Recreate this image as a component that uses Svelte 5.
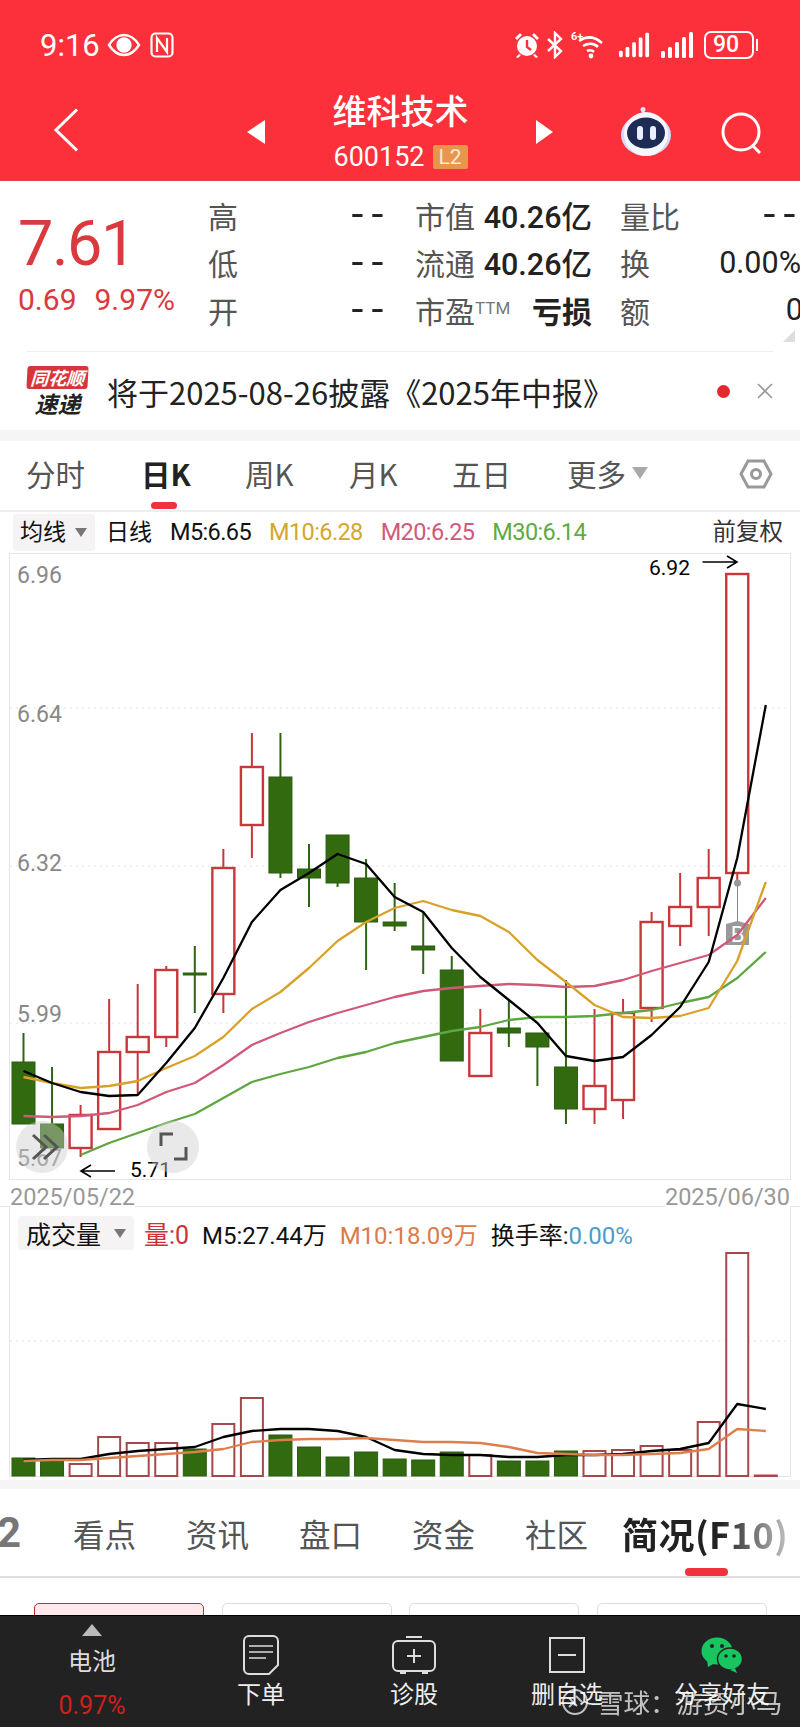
<script>
  // one day of the chart: wick top, body top, body bottom, wick bottom, up or down
  const candles = [
    [1033, 1062, 1124, 1124, 'g'], [1067, 1124, 1148, 1148, 'g'], [1105, 1115, 1148, 1157, 'r'],
    [999, 1052, 1129, 1129, 'r'], [984, 1037, 1052, 1095, 'r'], [966, 970, 1037, 1047, 'r'],
    [946, 973, 975, 1013, 'g'], [849, 868, 994, 1013, 'r'], [733, 767, 825, 858, 'r'],
    [733, 777, 873, 878, 'g'], [844, 869, 878, 907, 'g'], [835, 835, 883, 887, 'g'],
    [859, 878, 922, 970, 'g'], [883, 922, 926, 931, 'g'], [913, 946, 950, 974, 'g'],
    [956, 970, 1061, 1061, 'g'], [1009, 1033, 1076, 1076, 'r'], [1000, 1028, 1033, 1047, 'g'],
    [1033, 1033, 1047, 1086, 'g'], [980, 1067, 1109, 1124, 'g'], [1009, 1086, 1109, 1124, 'r'],
    [999, 1013, 1100, 1119, 'r'], [912, 922, 1008, 1022, 'r'], [873, 907, 926, 946, 'r'],
    [849, 878, 907, 936, 'r'], [574, 574, 873, 880, 'r']
  ];
  const xAt = (i) => 23.5 + i * 28.55;

  const ma5 = [1071, 1083, 1092, 1096, 1095, 1063, 1028, 978, 922, 890, 873, 854, 864, 897, 912, 948, 977, 1000, 1023, 1056, 1061, 1057, 1035, 1007, 962, 858, 705];
  const ma10 = [1077, 1083, 1088, 1086, 1081, 1068, 1056, 1037, 1009, 992, 968, 941, 922, 908, 901, 910, 916, 932, 960, 982, 1005, 1017, 1018, 1016, 1008, 961, 882];
  const ma20 = [1116, 1117, 1116, 1113, 1105, 1092, 1083, 1065, 1045, 1033, 1022, 1013, 1005, 997, 991, 988, 986, 984, 985, 987, 986, 980, 971, 963, 955, 935, 898];
  const ma30 = [null, null, 1155, 1143, 1133, 1123, 1114, 1098, 1082, 1074, 1067, 1058, 1052, 1043, 1037, 1031, 1027, 1020, 1017, 1017, 1016, 1013, 1010, 1003, 997, 978, 952];

  const volumes = [
    [1458, 'g'], [1461, 'g'], [1464, 'r'], [1437, 'r'], [1443, 'r'], [1443, 'r'], [1449, 'g'], [1424, 'r'], [1398, 'r'],
    [1435, 'g'], [1447, 'g'], [1457, 'g'], [1452, 'g'], [1459, 'g'], [1460, 'g'], [1452, 'g'], [1455, 'r'], [1461, 'g'],
    [1461, 'g'], [1451, 'g'], [1451, 'r'], [1450, 'r'], [1446, 'r'], [1450, 'r'], [1422, 'r'], [1253, 'r'], [1475.5, 'r']
  ];
  const volM5 = [1460, 1459, 1459, 1454, 1451, 1449, 1447, 1437, 1431, 1429, 1429, 1431, 1437, 1450, 1454, 1455, 1455, 1457, 1457, 1455, 1455, 1454, 1451, 1449, 1443, 1404, 1409];
  const volM10 = [1461, 1460, 1460, 1458, 1456, 1454, 1452, 1449, 1442, 1440, 1439, 1439, 1438, 1440, 1442, 1442, 1443, 1447, 1453, 1454, 1455, 1455, 1454, 1453, 1449, 1429, 1431];

  const line = (ys) => ys.map((y, i) => (y === null ? null : `${xAt(i)},${y}`)).filter(Boolean).join(' ');

  const axis = [['6.96', 575], ['6.64', 714], ['6.32', 863], ['5.99', 1014], ['5.67', 1158]];
  const quote = [
    ['高', '--', '市值', '40.26亿', '量比', '--'],
    ['低', '--', '流通', '40.26亿', '换', '0.00%'],
    ['开', '--', '市盈', '亏损', '额', '0']
  ];
  const periods = ['分时', '日K', '周K', '月K', '五日'];
  const sections = ['看点', '资讯', '盘口', '资金', '社区'];
</script>

<div class="phone">
  <header class="top">
    <div class="status">
      <span class="time">9:16</span>
      <svg class="ic-eye" viewBox="0 0 34 24" width="34" height="24" fill="none" stroke="#fff" stroke-width="2.4">
        <path d="M2 12C7 4 12 2 17 2s10 2 15 10c-5 8-10 10-15 10S7 20 2 12z" />
        <circle cx="17" cy="12" r="6.5" fill="#fff" />
      </svg>
      <svg class="ic-nfc" viewBox="0 0 24 26" width="24" height="26" fill="none" stroke="#fff" stroke-width="2.2">
        <rect x="1.5" y="1.5" width="21" height="23" rx="4" />
        <path d="M7 20V6l10 14V6" />
      </svg>
      <span class="spacer"></span>
      <svg viewBox="0 0 28 28" width="28" height="28" fill="#fff">
        <circle cx="14" cy="15" r="10" />
        <path d="M2 7l5-5 2 2-5 5zM26 7l-5-5-2 2 5 5zM6 23l-3 3 2 1 3-3zM22 23l3 3-2 1-3-3z" />
        <path d="M14 9v7l4 3" stroke="#fc303a" stroke-width="2.4" fill="none" />
      </svg>
      <svg viewBox="0 0 18 28" width="18" height="28" fill="none" stroke="#fff" stroke-width="2.4">
        <path d="M2 8l13 12-6 6V2l6 6L2 20" />
      </svg>
      <svg class="ic-wifi" viewBox="0 0 34 28" width="34" height="28" fill="none" stroke="#fff" stroke-width="2.6">
        <path d="M8 10c7-5 15-5 23 2M12 15c5-3 11-3 15 1M16 20c2-1 5-1 7 1" />
        <circle cx="20" cy="25" r="2.4" fill="#fff" stroke="none" />
        <text x="0" y="9" class="six">6+</text>
      </svg>
      <svg class="ic-bars first" viewBox="0 0 33 26" width="31" height="26" fill="#fff">
        <rect x="0" y="19" width="4" height="7" rx="1.5" /><rect x="7" y="15" width="4" height="11" rx="1.5" />
        <rect x="14" y="10" width="4" height="16" rx="1.5" /><rect x="21" y="5" width="4" height="21" rx="1.5" />
        <rect x="28" y="0" width="4" height="26" rx="1.5" />
      </svg>
      <svg class="ic-bars" viewBox="0 0 33 26" width="33" height="26" fill="#fff">
        <rect x="0" y="19" width="4" height="7" rx="1.5" /><rect x="7" y="15" width="4" height="11" rx="1.5" />
        <rect x="14" y="10" width="4" height="16" rx="1.5" /><rect x="21" y="5" width="4" height="21" rx="1.5" />
        <rect x="28" y="0" width="4" height="26" rx="1.5" />
      </svg>
      <span class="battery"><span>90</span></span>
    </div>

    <div class="nav">
      <svg class="back" viewBox="0 0 26 44" width="26" height="44" fill="none" stroke="#fff" stroke-width="3">
        <path d="M24 1.5L3 22l21 20.5" />
      </svg>
      <i class="tri left"></i>
      <div class="name">
        <h1>维科技术</h1>
        <div class="code">600152<b>L2</b></div>
      </div>
      <i class="tri right"></i>
      <svg class="robot" viewBox="0 0 50 50" width="50" height="50">
        <circle cx="22" cy="2.5" r="2.5" fill="#e4e6fa" />
        <path d="M22 4c1 3 2 4 3 5" stroke="#e4e6fa" stroke-width="2" fill="none" />
        <ellipse cx="25" cy="28" rx="25" ry="21" fill="#d5d9fb" />
        <circle cx="25" cy="27" r="22" fill="#f7f7ff" />
        <ellipse cx="25" cy="26" rx="19" ry="15.5" fill="#1e2b54" />
        <rect x="16" y="19" width="6" height="14" rx="3" fill="#e8f0ff" />
        <rect x="29" y="19" width="6" height="14" rx="3" fill="#e8f0ff" />
      </svg>
      <svg class="search" viewBox="0 0 42 42" width="42" height="42" fill="none" stroke="#fff" stroke-width="3">
        <circle cx="20" cy="20" r="18" />
        <path d="M31 33l8 8" />
      </svg>
    </div>
  </header>

  <section class="quote">
    <div class="price">
      <div class="last">7.61</div>
      <div class="change"><span>0.69</span><span>9.97%</span></div>
    </div>
    <div class="table">
      {#each quote as row, r}
        <div class="label">{row[0]}</div>
        <div class="value plain"><span class="dash">{row[1]}</span></div>
        <div class="label">{row[2]}{#if r === 2}<sup>TTM</sup>{/if}</div>
        <div class="value" class:loss={r === 2}>{row[3]}</div>
        <div class="label">{row[4]}</div>
        <div class="value plain" class:cut={r === 2}>
          {#if row[5] === '--'}<span class="dash edge">{row[5]}</span>{:else}{row[5]}{/if}
        </div>
      {/each}
    </div>
    <i class="fold"></i>
  </section>

  <section class="news">
    <div class="brand">
      <span class="tag">同花顺</span>
      <span class="flash">速递</span>
    </div>
    <p>将于2025-08-26披露《2025年中报》</p>
    <i class="dot"></i>
    <svg viewBox="0 0 16 16" width="16" height="16" fill="none" stroke="#999" stroke-width="1.6">
      <path d="M1 1l14 14M15 1L1 15" />
    </svg>
  </section>

  <nav class="periods">
    {#each periods as p, i}
      <span class:on={i === 1}>{p}</span>
    {/each}
    <span class="more">更多<i></i></span>
    <svg viewBox="0 0 34 30" width="34" height="30" fill="none" stroke="#999" stroke-width="3">
      <path d="M9 2h16l7 13-7 13H9L2 15z" />
      <circle cx="17" cy="15" r="4.5" />
    </svg>
  </nav>

  <div class="legend">
    <span class="chip">均线<i></i></span>
    <span class="day">日线</span>
    <span>M5:6.65</span>
    <span class="gold">M10:6.28</span>
    <span class="pink">M20:6.25</span>
    <span class="green">M30:6.14</span>
    <span class="adjust">前复权</span>
  </div>

  <div class="kline">
    <svg viewBox="0 553 800 627" width="800" height="627">
      <rect x="9.5" y="553.5" width="781" height="626" fill="#fff" stroke="#e6e6e6" />
      {#each [708, 866, 1023] as y}
        <line x1="10" x2="790" y1={y} y2={y} stroke="#e2e2e2" stroke-dasharray="2 4" />
      {/each}
      {#each axis as [t, y]}
        <text x="17" y={y + 8} class="tick">{t}</text>
      {/each}

      {#each candles as [top, a, b, bottom, dir], i}
        <line x1={xAt(i)} x2={xAt(i)} y1={top} y2={bottom} class={dir === 'r' ? 'wick-r' : 'wick-g'} />
        {#if dir === 'r'}
          <rect x={xAt(i) - 11} y={a} width="22" height={b - a} class="up" />
        {:else}
          <rect x={xAt(i) - 11.5} y={a} width="23" height={b - a} class="down" />
        {/if}
      {/each}

      <line x1="737.5" x2="737.5" y1="883" y2="922" stroke="#888" />
      <circle cx="737.5" cy="883" r="3.5" fill="#999" />
      <path d="M726 924l11.5-3 11.5 3v21h-23z" fill="#999" />
      <text x="737.5" y="942" class="buy">B</text>

      <polyline points={line(ma30)} class="ma" stroke="#5fa641" />
      <polyline points={line(ma20)} class="ma" stroke="#cf5a78" />
      <polyline points={line(ma10)} class="ma" stroke="#d9a12a" />
      <polyline points={line(ma5)} class="ma" stroke="#000" />

      <text x="649" y="575" class="mark">6.92</text>
      <path d="M702.5 562h35M727 556l10 6-10 6" fill="none" stroke="#000" stroke-width="1.6" />
      <text x="130" y="1177" class="mark">5.71</text>
      <path d="M115 1171H81M91 1165l-10 6 10 6" fill="none" stroke="#000" stroke-width="1.6" />

      <circle cx="42" cy="1147" r="26" class="float" />
      <path d="M33 1135l13 12-13 12M44 1135l13 12-13 12" fill="none" stroke="#555" stroke-width="3" />
      <circle cx="173" cy="1147" r="26" class="float" />
      <path d="M161 1146v-12h12M186 1147v12h-12" fill="none" stroke="#555" stroke-width="3" />
    </svg>
  </div>

  <div class="dates"><span>2025/05/22</span><span>2025/06/30</span></div>

  <div class="volume">
    <div class="vol-legend">
      <span class="chip">成交量<i></i></span>
      <span class="red">量:0</span>
      <span>M5:27.44万</span>
      <span class="orange">M10:18.09万</span>
      <span>换手率:<em>0.00%</em></span>
    </div>
    <svg viewBox="0 1250 800 230" width="800" height="230">
      <path d="M9.5 1250v226.500M790.5 1250v226.500M9.5 1476.500h781" fill="none" stroke="#e6e6e6" />
      <line x1="10" x2="790" y1="1341" y2="1341" stroke="#e2e2e2" stroke-dasharray="2 4" />
      {#each volumes as [top, dir], i}
        {#if dir === 'r'}
          <rect x={xAt(i) - 11} y={top} width="22" height={1476 - top} class="vol-up" />
        {:else}
          <rect x={xAt(i) - 11.5} y={top} width="23" height={1476 - top} class="down" />
        {/if}
      {/each}
      <polyline points={line(volM5)} class="ma" stroke="#000" />
      <polyline points={line(volM10)} class="ma" stroke="#dd7f4c" />
    </svg>
  </div>

  <nav class="sections">
    <span class="cut-off">2</span>
    {#each sections as s}
      <span>{s}</span>
    {/each}
    <span class="active">简况(F10)</span>
  </nav>

  <div class="cards">
    <i class="sel"></i><i></i><i></i><i></i>
  </div>

  <footer class="bottom">
    <div class="item stock">
      <i class="up-tri"></i>
      <span class="stock-name">电池</span>
      <span class="stock-rate">0.97%</span>
    </div>
    <div class="item">
      <svg viewBox="0 0 36 40" width="36" height="40" fill="none" stroke="#ddd" stroke-width="2">
        <path d="M6 1h24a5 5 0 0 1 5 5v24l-9 9H6a5 5 0 0 1-5-5V6a5 5 0 0 1 5-5z" />
        <path d="M6 11h24M6 17h24M6 23h17" stroke-width="1.6" />
      </svg>
      <span>下单</span>
    </div>
    <div class="item">
      <svg viewBox="0 0 44 40" width="44" height="40" fill="none" stroke="#ddd" stroke-width="2">
        <rect x="1" y="6" width="42" height="30" rx="5" />
        <path d="M14 2h16M8 38h6M30 38h6M22 14v14M15 21h14" />
      </svg>
      <span>诊股</span>
    </div>
    <div class="item">
      <svg viewBox="0 0 36 36" width="36" height="36" fill="none" stroke="#ddd" stroke-width="2">
        <rect x="1" y="1" width="34" height="34" />
        <path d="M9 18h18" />
      </svg>
      <span>删自选</span>
    </div>
    <div class="item">
      <svg viewBox="0 0 42 36" width="42" height="36" fill="#19c55f">
        <ellipse cx="16" cy="14" rx="15.5" ry="13.5" />
        <path d="M6 23l1 7 7-4z" />
        <ellipse cx="29" cy="22" rx="12.5" ry="11" stroke="#222" stroke-width="1.5" />
        <path d="M34 31l2 5-7-3z" />
        <circle cx="11" cy="9" r="2" fill="#222" /><circle cx="21" cy="9" r="2" fill="#222" />
        <circle cx="25" cy="19" r="1.8" fill="#222" /><circle cx="33" cy="19" r="1.8" fill="#222" />
      </svg>
      <span>分享好友</span>
    </div>
  </footer>

  <div class="watermark">
    <svg viewBox="0 0 28 28" width="28" height="28" fill="none" stroke="#fff" stroke-width="2">
      <circle cx="14" cy="14" r="12" />
      <path d="M8 10l8 8M15 8l6 6M8 19l5-5" />
    </svg>
    <span>雪球：游资小马</span>
  </div>
</div>

<style>
  :global(body) {
    margin: 0;
    background: #fff;
  }
  .phone {
    position: relative;
    width: 800px;
    height: 1727px;
    overflow: hidden;
    background: #fff;
    font-family: Roboto, "Noto Sans CJK SC", sans-serif;
    color: #111;
  }
  i {
    display: block;
    font-style: normal;
  }
  svg {
    display: block;
    flex: none;
  }

  .top {
    height: 181px;
    background: #fc303a;
    border-bottom: 1px solid #d8444a;
    box-sizing: border-box;
    color: #fff;
  }
  .status {
    display: flex;
    align-items: center;
    height: 46px;
    padding: 22px 46px 0 40px;
  }
  .time {
    font-size: 31px;
    width: 65px;
  }
  .ic-eye {
    margin: 0 4px 0 2px;
  }
  .spacer {
    flex: 1;
  }
  .status svg + svg {
    margin-left: 5px;
  }
  .status .ic-wifi {
    margin-left: 7px;
  }
  .six {
    font-size: 11px;
    fill: #fff;
    stroke: none;
    font-weight: 700;
  }
  .status .ic-bars {
    margin-left: 11px;
  }
  .status .ic-bars.first {
    margin-left: 14px;
  }
  .battery {
    position: relative;
    margin-left: 10px;
    width: 46px;
    height: 24px;
    border: 2px solid #fff;
    border-radius: 7px;
    text-align: center;
    font-size: 23px;
    line-height: 24px;
    font-weight: 500;
  }
  .battery::after {
    content: "";
    position: absolute;
    top: 6px;
    right: -6px;
    width: 2px;
    height: 12px;
    background: #fff;
  }
  .battery span {
    display: block;
    margin-right: 6px;
  }

  .nav {
    display: flex;
    align-items: flex-start;
    height: 112px;
  }
  .back {
    margin: 40px 0 0 53px;
  }
  .tri {
    width: 0;
    height: 0;
    margin-top: 52px;
    border-top: 12px solid transparent;
    border-bottom: 12px solid transparent;
  }
  .tri.left {
    margin-left: 168px;
    border-right: 18px solid #fff;
  }
  .tri.right {
    border-left: 17px solid #fff;
  }
  .name {
    width: 271px;
    text-align: center;
  }
  h1 {
    margin: 0;
    padding-top: 22px;
    font-size: 34px;
    line-height: 40px;
    font-weight: 500;
    font-family: "Noto Sans CJK SC", sans-serif;
  }
  .code {
    display: flex;
    justify-content: center;
    align-items: center;
    font-size: 27px;
    line-height: 32px;
    margin-top: 11px;
  }
  .code b {
    width: 35px;
    height: 24px;
    margin-left: 8px;
    background: #e8964c;
    border-radius: 2px;
    font-size: 21px;
    line-height: 24px;
    font-weight: 400;
    color: #fce8d4;
  }
  .robot {
    margin: 39px 0 0 68px;
  }
  .search {
    margin: 44px 0 0 50px;
  }

  .quote {
    position: relative;
    display: flex;
    height: 170px;
  }
  .price {
    width: 208px;
    padding-left: 18px;
    box-sizing: border-box;
    color: #d93a3d;
  }
  .last {
    font-size: 63px;
    line-height: 74px;
    margin-top: 26px;
    font-weight: 400;
    letter-spacing: -1.5px;
  }
  .change {
    display: flex;
    gap: 18px;
    font-size: 30px;
    line-height: 32px;
    margin-top: 3px;
  }
  .table {
    display: grid;
    grid-template-columns: 30px 147px 92px 115px 91px 117px;
    grid-auto-rows: 47.5px;
    padding-top: 10px;
    width: 592px;
    flex: none;
    align-items: center;
  }
  .label {
    font-family: "Noto Sans CJK SC", sans-serif;
    font-size: 30px;
    color: #555;
    white-space: nowrap;
  }
  .label:nth-child(6n + 3) {
    margin-left: 30px;
  }
  .label:nth-child(6n + 5) {
    margin-left: 28px;
  }
  .value {
    font-size: 30.5px;
    text-align: right;
    white-space: nowrap;
    font-weight: 500;
    color: #222;
  }
  .value:nth-child(6n) {
    margin-right: -1px;
  }
  .value.plain {
    font-weight: 400;
  }
  .value.plain.cut {
    margin-right: -3px;
  }
  .value.loss {
    font-size: 30px;
    font-weight: 700;
    font-family: "Noto Sans CJK SC", sans-serif;
  }
  .dash {
    display: inline-block;
    font-weight: 500;
    letter-spacing: 5px;
    transform: scaleX(1.3);
    transform-origin: right center;
    margin-right: -6px;
  }
  .dash.edge {
    margin-right: -2px;
  }
  sup {
    font-size: 17px;
    font-family: Roboto, sans-serif;
    line-height: 0;
    vertical-align: 9px;
    color: #777;
  }
  .fold {
    position: absolute;
    right: 5px;
    top: 149px;
    width: 0;
    height: 0;
    border-left: 12px solid transparent;
    border-bottom: 12px solid #ddd;
  }

  .news {
    display: flex;
    align-items: center;
    height: 78px;
    margin: 0 27px;
    border-top: 1px solid #eee;
  }
  .news p {
    flex: 1;
    margin: 0 0 0 19px;
    font-size: 31px;
    font-family: "Noto Sans CJK SC", sans-serif;
    color: #222;
    white-space: nowrap;
  }
  .brand {
    width: 61px;
    text-align: center;
    font-family: "Noto Sans CJK SC", sans-serif;
    font-style: italic;
    font-weight: 700;
  }
  .tag {
    display: block;
    background: #d8353a;
    border-radius: 3px;
    color: #fff;
    font-size: 18px;
    line-height: 23px;
    transform: skewX(-3deg);
  }
  .flash {
    display: block;
    font-size: 23px;
    line-height: 28px;
    color: #222;
  }
  .dot {
    width: 13px;
    height: 13px;
    background: #e3282f;
    border-radius: 50%;
    margin-right: 27px;
  }

  .periods {
    display: grid;
    grid-template-columns: 115px 104px 104px 103px 115px 172px auto;
    align-items: center;
    height: 69px;
    padding-left: 26px;
    border-top: 11px solid #f5f5f5;
    border-bottom: 2px solid #eee;
    font-size: 29.5px;
    font-family: "Noto Sans CJK SC", sans-serif;
    color: #555;
  }
  .periods span {
    line-height: 40px;
    margin-top: -5px;
  }
  .periods .on {
    color: #222;
    font-weight: 700;
    position: relative;
  }
  .periods .on::after {
    content: "";
    position: absolute;
    left: 10px;
    top: 49px;
    width: 26px;
    height: 7px;
    border-radius: 4px;
    background: #f0323c;
  }
  .more {
    display: flex;
    align-items: center;
    gap: 6px;
  }
  .more i {
    width: 0;
    height: 0;
    border-left: 8px solid transparent;
    border-right: 8px solid transparent;
    border-top: 12px solid #aaa;
  }
  .periods svg {
    margin-top: -4px;
  }

  .legend {
    display: flex;
    align-items: center;
    height: 41px;
    padding-left: 13px;
    font-size: 23.5px;
    letter-spacing: -0.6px;
    color: #111;
    white-space: nowrap;
  }
  .chip {
    display: flex;
    align-items: center;
    justify-content: space-between;
    box-sizing: border-box;
    background: #f5f3f3;
    border-radius: 4px;
    padding: 0 8px;
    letter-spacing: 0;
  }
  .chip i {
    width: 0;
    height: 0;
    border-left: 6px solid transparent;
    border-right: 6px solid transparent;
    border-top: 9px solid #777;
    margin-left: 8px;
  }
  .legend span {
    margin-right: 18px;
    line-height: 37px;
  }
  .legend .chip {
    width: 82px;
    height: 37px;
    margin-right: 11px;
    padding-left: 7px;
    font-size: 23px;
  }
  .legend .day {
    letter-spacing: 0;
    font-size: 23px;
  }
  .gold { color: #d4a72c; }
  .pink { color: #d05a78; }
  .green { color: #5faa45; }
  .legend .adjust {
    margin: 0 17px 0 auto;
    font-size: 23.5px;
    letter-spacing: 0;
    color: #333;
  }

  .kline {
    height: 627px;
  }
  .kline svg text {
    font-family: Roboto, sans-serif;
  }
  .tick {
    font-size: 23px;
    fill: #888;
  }
  .mark {
    font-size: 21px;
    fill: #000;
  }
  .buy {
    font-size: 22px;
    fill: #fff;
    text-anchor: middle;
  }
  .wick-r {
    stroke: #c8373a;
    stroke-width: 2;
  }
  .wick-g {
    stroke: #2f6410;
    stroke-width: 2;
  }
  .up {
    fill: #fff;
    stroke: #c8373a;
    stroke-width: 2.4;
  }
  .down {
    fill: #326a10;
    stroke: #2b5c0e;
  }
  .vol-up {
    fill: #fff;
    stroke: #a5474c;
    stroke-width: 2;
  }
  .ma {
    fill: none;
    stroke-width: 2.3;
    stroke-linejoin: round;
  }
  .float {
    fill: #cfcfcf;
    fill-opacity: 0.45;
  }

  .dates {
    display: flex;
    justify-content: space-between;
    height: 27px;
    padding: 0 10px 0 10px;
    font-size: 23.5px;
    color: #999;
    background: linear-gradient(#fff 26px, #e6e6e6 26px);
  }
  .dates span {
    background: #fff;
    height: 27px;
    line-height: 27px;
    margin-top: 4px;
  }

  .vol-legend {
    display: flex;
    align-items: center;
    box-sizing: border-box;
    height: 44px;
    padding: 8px 0 0 9px;
    margin: 0 9px;
    border-left: 1px solid #e6e6e6;
    border-right: 1px solid #e6e6e6;
    font-size: 24px;
    white-space: nowrap;
  }
  .vol-legend span {
    margin-right: 13px;
  }
  .vol-legend .chip {
    width: 116px;
    height: 34px;
    margin-right: 10px;
    font-size: 25px;
    margin-left: -1px;
  }
  .red {
    color: #c9333a;
    font-size: 25px;
  }
  .orange { color: #dc7a4a; }
  em {
    font-style: normal;
    color: #4a9ccc;
  }
  .volume {
    height: 273px;
  }
  .volume svg {
    margin-top: -1px;
  }

  .sections {
    display: grid;
    grid-template-columns: 73px 113px 113px 113px 113px 97px auto;
    align-items: center;
    box-sizing: border-box;
    height: 98px;
    border-top: 9px solid #f5f5f5;
    border-bottom: 2px solid #ddd;
    font-size: 31.5px;
    font-family: "Noto Sans CJK SC", sans-serif;
    color: #555;
    position: relative;
    overflow: hidden;
    white-space: nowrap;
  }
  .sections .cut-off {
    font-size: 42px;
    font-weight: 700;
    color: #777;
    margin-left: -3px;
    font-family: Roboto, sans-serif;
  }
  .active {
    font-size: 36px;
    font-weight: 700;
    letter-spacing: 0.5px;
    background: linear-gradient(90deg, #222 55%, #ddd 100%);
    -webkit-background-clip: text;
    background-clip: text;
    color: transparent;
  }
  .sections .active::after {
    content: "";
    position: absolute;
    left: 685px;
    bottom: 0;
    width: 43px;
    height: 8px;
    border-radius: 4px;
    background: #f0323c;
  }

  .cards {
    display: flex;
    padding: 25px 0 0 34px;
    gap: 17.5px;
    height: 13px;
    overflow: hidden;
  }
  .cards i {
    width: 170px;
    height: 40px;
    box-sizing: border-box;
    border: 1.5px solid #ddd;
    border-radius: 5px;
  }
  .cards .sel {
    background: #fde8ea;
    border-color: #c02a30;
  }

  .bottom {
    position: absolute;
    left: 0;
    bottom: 0;
    width: 800px;
    height: 112px;
    box-sizing: border-box;
    display: grid;
    grid-template-columns: 184px 154px 152px 154px 156px;
    background: #222;
    border-top: 1px solid #000;
    font-family: "Noto Sans CJK SC", sans-serif;
    font-size: 24px;
    color: #eee;
  }
  .item {
    display: flex;
    flex-direction: column;
    align-items: center;
    padding-top: 19px;
  }
  .item span {
    line-height: 34px;
    margin-top: 1px;
  }
  .item svg {
    height: 40px;
  }
  .stock {
    padding-top: 8px;
  }
  .up-tri {
    width: 0;
    height: 0;
    border-left: 10px solid transparent;
    border-right: 10px solid transparent;
    border-bottom: 12px solid #bbb;
  }
  .item .stock-name {
    margin-top: 7px;
    color: #ddd;
  }
  .item .stock-rate {
    margin-top: 12px;
    color: #d0201c;
    font-family: Roboto, sans-serif;
    font-size: 25px;
  }

  .watermark {
    position: absolute;
    left: 561px;
    top: 1682px;
    display: flex;
    align-items: center;
    gap: 8px;
    font-family: "Noto Sans CJK SC", sans-serif;
    font-size: 26.5px;
    color: #fff;
    opacity: 0.72;
    white-space: nowrap;
  }
</style>
